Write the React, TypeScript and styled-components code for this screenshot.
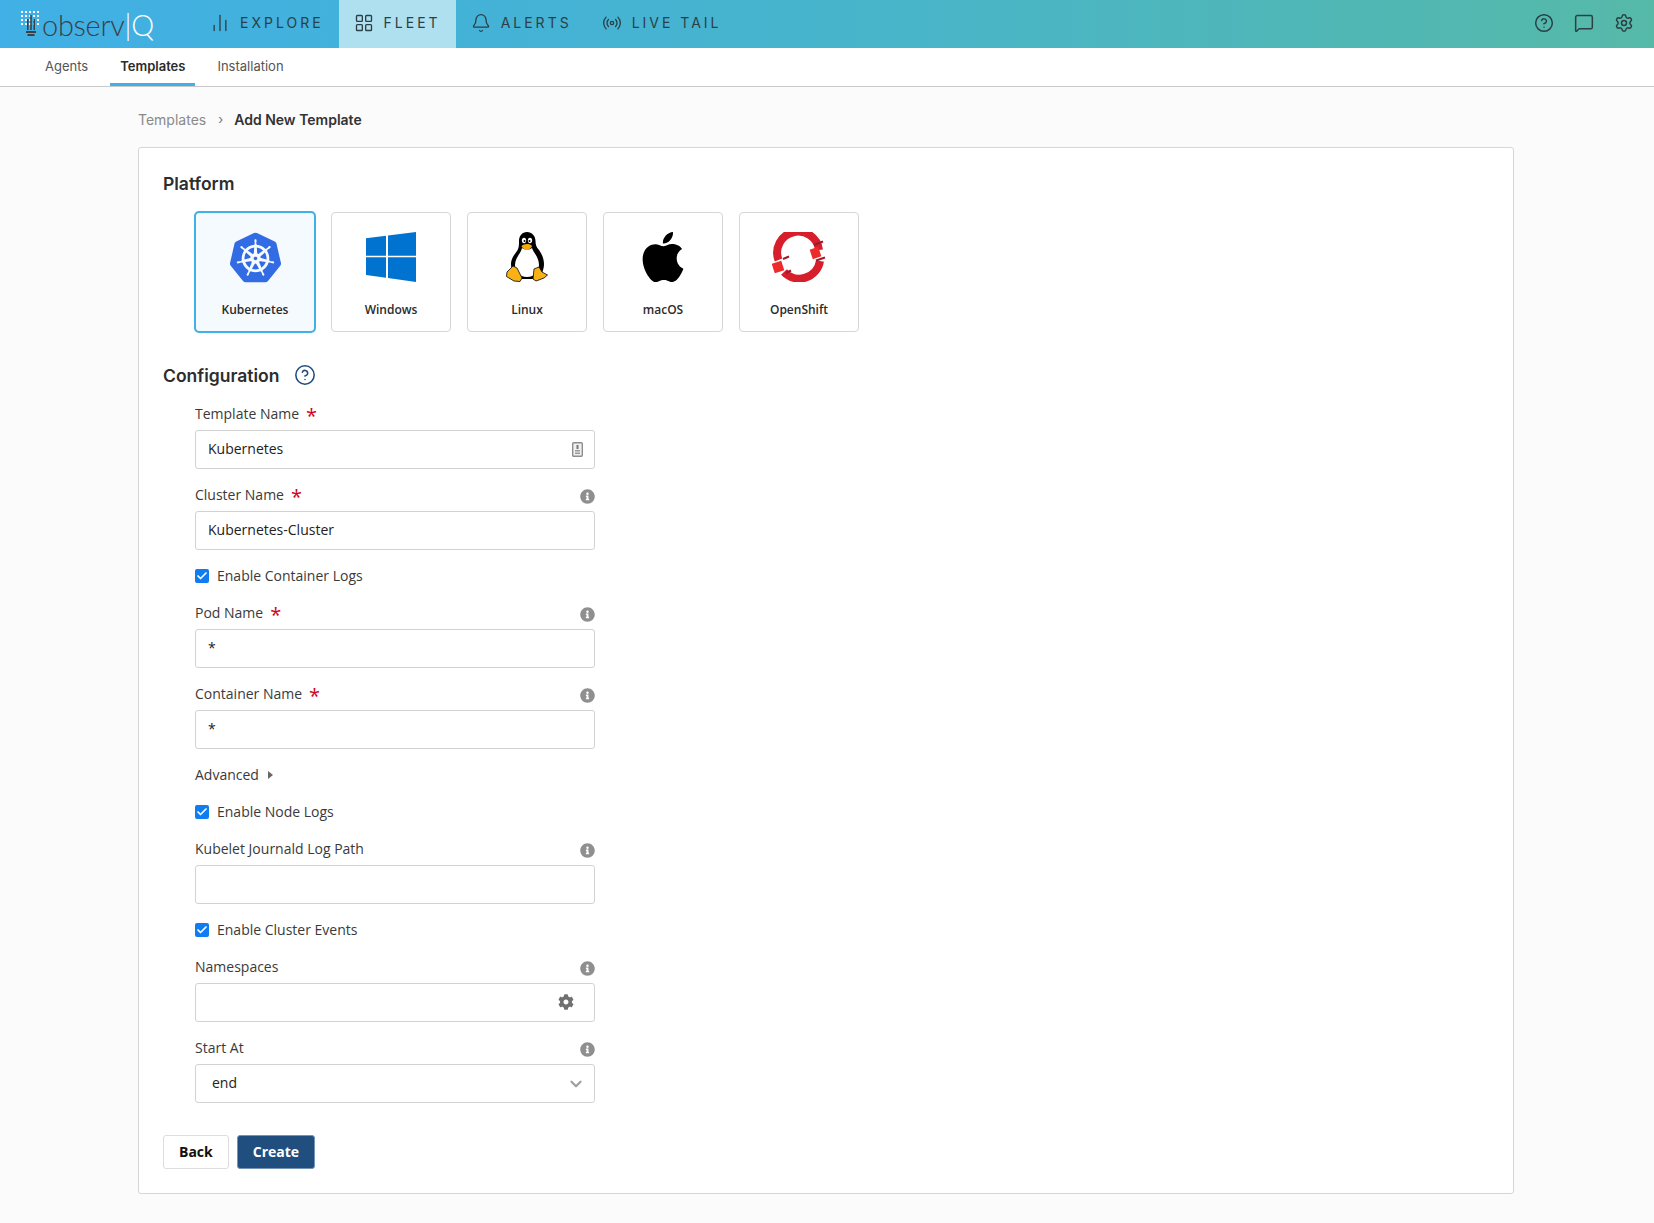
import React from 'react';
import styled, { createGlobalStyle } from 'styled-components';
import {
  Bell,
  ChartNoAxesColumn,
  Check,
  ChevronDown,
  CircleHelp,
  LayoutGrid,
  MessageSquare,
  Radio,
  Settings,
} from 'lucide-react';
import { FaCog, FaInfoCircle } from 'react-icons/fa';
import { SiApple, SiKubernetes } from 'react-icons/si';

const GlobalStyle = createGlobalStyle`
  html, body {
    margin: 0;
    padding: 0;
    background: #fbfbfb;
    font-family: 'Open Sans', sans-serif;
    color: #333333;
  }
  * {
    box-sizing: border-box;
  }
`;

const TopBar = styled.header`
  display: flex;
  align-items: stretch;
  height: 48px;
  background: linear-gradient(90deg, #40b0e6 0%, #47b4cc 50%, #56b9a8 100%);
`;

const Logo = styled.div`
  display: flex;
  align-items: center;
  width: 195px;
  padding-left: 20px;
  font-family: 'Lato', sans-serif;
  font-weight: 300;
  font-size: 29px;
  letter-spacing: -0.3px;
  color: #3c4147;
  & > svg {
    margin-right: 2px;
  }
`;

const LogoMark = styled.span`
  color: #ffffff;
`;

const NavItem = styled.div<{ $active?: boolean }>`
  display: flex;
  align-items: center;
  gap: 10px;
  padding: 0 15px 3px;
  font-family: 'Inter', sans-serif;
  font-size: 14px;
  font-weight: 400;
  letter-spacing: 3px;
  color: #2c3f47;
  background: ${(p) => (p.$active ? '#aee0f0' : 'transparent')};
`;

const TopIcons = styled.div`
  display: flex;
  align-items: center;
  gap: 20px;
  margin-left: auto;
  padding: 0 20px 2px 0;
  color: #2b4046;
`;

const SubBar = styled.nav`
  display: flex;
  gap: 12px;
  height: 39px;
  padding-left: 35px;
  background: #ffffff;
  border-bottom: 1px solid #c9c9cb;
`;

const SubTab = styled.div<{ $active?: boolean }>`
  display: flex;
  align-items: center;
  padding: 0 10px;
  height: 38px;
  font-family: 'Inter', sans-serif;
  font-size: 13px;
  font-weight: ${(p) => (p.$active ? 600 : 400)};
  color: ${(p) => (p.$active ? '#2b2b2b' : '#555555')};
  border-bottom: 3px solid ${(p) => (p.$active ? '#40b0e6' : 'transparent')};
`;

const Main = styled.main`
  width: 1376px;
  margin-left: 138px;
  padding-top: 23px;
  padding-bottom: 30px;
`;

const Crumbs = styled.div`
  display: flex;
  align-items: center;
  height: 20px;
  padding-bottom: 2px;
  margin-bottom: 17px;
  font-family: 'Inter', sans-serif;
  font-size: 14px;
  color: #8a8a8a;
`;

const CrumbSep = styled.span`
  margin: 0 11px 0 12px;
  font-size: 13px;
  color: #777777;
`;

const CrumbCurrent = styled.span`
  font-weight: 600;
  color: #333333;
`;

const Card = styled.section`
  padding: 25px 24px 24px;
  background: #ffffff;
  border: 1px solid #d6d6d6;
  border-radius: 3px;
`;

const Heading = styled.h2`
  display: flex;
  align-items: center;
  gap: 15px;
  margin: 0;
  height: 20px;
  font-family: 'Inter', sans-serif;
  font-size: 17.5px;
  font-weight: 600;
  color: #2d2d2d;
`;

const HelpMark = styled.span`
  display: flex;
  color: #1f4e7f;
`;

const TileRow = styled.div`
  display: flex;
  gap: 16px;
  margin: 19px 0 33px 32px;
`;

const Tile = styled.div<{ $selected?: boolean }>`
  display: flex;
  flex-direction: column;
  align-items: center;
  width: 120px;
  height: 120px;
  padding-top: 19px;
  background: ${(p) => (p.$selected ? '#f5faff' : '#ffffff')};
  border: 1px solid #d6d6d6;
  border-radius: 4px;
  ${(p) => p.$selected && 'outline: 2px solid #40b0e6; outline-offset: -1px;'}
`;

const TileIcon = styled.div`
  display: flex;
  align-items: center;
  justify-content: center;
  height: 50px;
  margin-bottom: 20px;
`;

const TileName = styled.div`
  font-size: 12px;
  font-weight: 600;
  line-height: 16px;
  color: #2b2b2b;
`;

const Fields = styled.div`
  display: flex;
  flex-direction: column;
  gap: 16px;
  width: 400px;
  margin: 19px 0 32px 32px;
`;

const Field = styled.div`
  display: flex;
  flex-direction: column;
  gap: 6px;
`;

const LabelRow = styled.div`
  display: flex;
  align-items: center;
  justify-content: space-between;
  height: 20px;
  padding-bottom: 2px;
  font-size: 14px;
  color: #3a3a3a;
  & > svg {
    margin-top: 4px;
    color: #8f8f8f;
  }
`;

const Required = styled.span`
  margin-left: 7px;
  font-size: 20px;
  line-height: 14px;
  vertical-align: -4px;
  color: #d0021b;
`;

const InputBox = styled.div`
  display: flex;
  align-items: center;
  height: 39px;
  padding: 0 11px 0 12px;
  background: #ffffff;
  border: 1px solid #d2d2d2;
  border-radius: 3px;
`;

const TextInput = styled.input`
  flex: 1;
  min-width: 0;
  margin-bottom: 2px;
  padding: 0;
  border: none;
  outline: none;
  background: transparent;
  font-family: 'Open Sans', sans-serif;
  font-size: 14px;
  color: #222222;
`;

const CogIcon = styled(FaCog)`
  margin: 0 9px 2px 0;
  color: #707070;
`;

const SelectBox = styled(InputBox)`
  justify-content: space-between;
  padding: 0 9px 2px 16px;
  font-size: 14px;
  color: #222222;
  & > svg {
    margin-top: 2px;
    color: #a0a0a0;
  }
`;

const CheckRow = styled.label`
  display: flex;
  align-items: center;
  gap: 8px;
  height: 21px;
  padding-bottom: 2px;
  font-size: 14px;
  color: #3a3a3a;
`;

const CheckBox = styled.span`
  display: flex;
  align-items: center;
  justify-content: center;
  width: 14px;
  height: 14px;
  background: #0f7cf0;
  border-radius: 2px;
  color: #ffffff;
`;

const Disclosure = styled.div`
  display: flex;
  align-items: center;
  gap: 9px;
  height: 21px;
  padding-bottom: 2px;
  font-size: 14px;
  color: #3a3a3a;
`;

const Caret = styled.span`
  width: 0;
  height: 0;
  border-left: 5px solid #666666;
  border-top: 4px solid transparent;
  border-bottom: 4px solid transparent;
`;

const Actions = styled.div`
  display: flex;
  gap: 8px;
`;

const Button = styled.button<{ $primary?: boolean }>`
  height: 34px;
  padding: 0 15px 2px;
  font-family: 'Open Sans', sans-serif;
  font-size: 14px;
  font-weight: 700;
  color: ${(p) => (p.$primary ? '#ffffff' : '#111111')};
  background: ${(p) => (p.$primary ? '#1f4e7f' : '#ffffff')};
  border: 1px solid ${(p) => (p.$primary ? '#7593b3' : '#dedede')};
  border-radius: 3px;
`;

const BulbLogo = () => (
  <svg width="20" height="27" viewBox="0 0 20 27">
    {[0, 1, 2, 3].map((r) =>
      [0, 4, 8, 12, 16].map((x) => (
        <rect key={`${r}-${x}`} x={x + 1} y={r * 4} width="2" height="2" fill="#ffffff" />
      )),
    )}
    <rect x="7" y="8" width="1.6" height="11" fill="#3c4147" />
    <rect x="10.2" y="4" width="1.6" height="15" fill="#3c4147" />
    <rect x="13.4" y="8" width="1.6" height="11" fill="#3c4147" />
    <rect x="6" y="20" width="10" height="2" fill="#3c4147" />
    <rect x="7.5" y="23" width="7" height="2" fill="#3c4147" />
  </svg>
);

const WindowsLogo = () => (
  <svg width="50" height="50" viewBox="0 0 50 50" fill="#0072d0">
    <polygon points="0,6.3 20,3.8 20,23.7 0,23.7" />
    <polygon points="22,3.4 50,0 50,23.7 22,23.7" />
    <polygon points="0,25.3 20,25.3 20,45.7 0,43" />
    <polygon points="22,25.3 50,25.3 50,50 22,46" />
  </svg>
);

const TuxLogo = () => (
  <svg width="42" height="50" viewBox="0 0 42 50">
    <path
      d="M21 0c5 0 8.500 4 8.500 9 0 4 1 6 3.500 9 3 4 5 9 5 14 0 6-3 13-7 15H12c-4-2-7-9-7-15 0-5 3-9 6-13 2-3 2-6 2-10 0-5 3-9 8-9z"
      fill="#000000"
    />
    <path
      d="M16 16c3 2 7 2 10 0 1 4 7 9 7 17 0 6-4 12-12 12S9 39 9 33c0-7 6-12 7-17z"
      fill="#ffffff"
    />
    <ellipse cx="18" cy="8.500" rx="2.100" ry="2.800" fill="#ffffff" />
    <ellipse cx="24" cy="8.500" rx="2.100" ry="2.800" fill="#ffffff" />
    <circle cx="18.500" cy="9" r="1" fill="#000000" />
    <circle cx="23.500" cy="9" r="1" fill="#000000" />
    <path d="M15.500 14c2-2 8-3 10.500 0 0 1-3 4-5 4s-5-2-5.500-4z" fill="#f5a90d" />
    <polygon
      points="1,40 7,34 11,36 16,46 14,49.500 8,49 0.500,44.500"
      fill="#f9b115"
      stroke="#1a1a1a"
      strokeWidth="0.900"
      strokeLinejoin="round"
    />
    <polygon
      points="28,37 33,35 36,40 41.500,43 38,46 30,49 27,47"
      fill="#f9b115"
      stroke="#1a1a1a"
      strokeWidth="0.900"
      strokeLinejoin="round"
    />
  </svg>
);

const OpenShiftLogo = () => (
  <svg width="54" height="50" viewBox="0 0 54 50" fill="none">
    <path d="M6.500 28A21 21 0 1 1 47 18" stroke="#d71e2b" strokeWidth="8" />
    <path d="M48 29A21 21 0 0 1 12 40" stroke="#d71e2b" strokeWidth="8" />
    <rect x="1" y="30" width="10" height="10" fill="#ee2b2b" transform="rotate(-18 6 35)" />
    <rect x="39" y="16" width="9" height="10" fill="#ee2b2b" transform="rotate(-18 43.500 21)" />
    <path d="M11 27l6-2.500M14 41l5-2.500M42 13l9-3.500M44 28.500l9-3" stroke="#a01a2c" strokeWidth="2" />
  </svg>
);

const VaultIcon = () => (
  <svg width="11" height="15" viewBox="0 0 11 15">
    <rect x="0.7" y="0.7" width="9.600" height="13.600" rx="1" fill="#f1f1f1" stroke="#8d8d8d" strokeWidth="1.400" />
    <rect x="4.500" y="3" width="2" height="4" fill="#777777" />
    <rect x="3" y="8" width="5" height="1.500" fill="#999999" />
    <rect x="3" y="10.500" width="5" height="1.500" fill="#999999" />
  </svg>
);

const Info = () => <FaInfoCircle size={15} />;

const Star = () => <Required>*</Required>;

const Checked: React.FC<{ label: string }> = ({ label }) => (
  <CheckRow>
    <CheckBox>
      <Check size={12} strokeWidth={3.5} />
    </CheckBox>
    {label}
  </CheckRow>
);

const platforms = [
  { name: 'Kubernetes', icon: <SiKubernetes size={51} color="#326ce5" />, selected: true },
  { name: 'Windows', icon: <WindowsLogo /> },
  { name: 'Linux', icon: <TuxLogo /> },
  { name: 'macOS', icon: <SiApple size={50} color="#000000" /> },
  { name: 'OpenShift', icon: <OpenShiftLogo /> },
];

const App: React.FC = () => {
  return (
    <>
      <GlobalStyle />
      <TopBar>
        <Logo>
          <BulbLogo />
          observ<LogoMark>|Q</LogoMark>
        </Logo>
        <NavItem>
          <ChartNoAxesColumn size={20} strokeWidth={1.6} />
          EXPLORE
        </NavItem>
        <NavItem $active>
          <LayoutGrid size={20} strokeWidth={1.6} />
          FLEET
        </NavItem>
        <NavItem>
          <Bell size={20} strokeWidth={1.6} />
          ALERTS
        </NavItem>
        <NavItem>
          <Radio size={20} strokeWidth={1.6} />
          LIVE TAIL
        </NavItem>
        <TopIcons>
          <CircleHelp size={20} strokeWidth={1.8} />
          <MessageSquare size={20} strokeWidth={1.8} />
          <Settings size={20} strokeWidth={1.8} />
        </TopIcons>
      </TopBar>
      <SubBar>
        <SubTab>Agents</SubTab>
        <SubTab $active>Templates</SubTab>
        <SubTab>Installation</SubTab>
      </SubBar>
      <Main>
        <Crumbs>
          Templates
          <CrumbSep>›</CrumbSep>
          <CrumbCurrent>Add New Template</CrumbCurrent>
        </Crumbs>
        <Card>
          <Heading>Platform</Heading>
          <TileRow>
            {platforms.map((p) => (
              <Tile key={p.name} $selected={p.selected}>
                <TileIcon>{p.icon}</TileIcon>
                <TileName>{p.name}</TileName>
              </Tile>
            ))}
          </TileRow>
          <Heading>
            Configuration
            <HelpMark>
              <CircleHelp size={22} strokeWidth={1.7} />
            </HelpMark>
          </Heading>
          <Fields>
            <Field>
              <LabelRow>
                <span>
                  Template Name
                  <Star />
                </span>
              </LabelRow>
              <InputBox>
                <TextInput readOnly value="Kubernetes" />
                <VaultIcon />
              </InputBox>
            </Field>
            <Field>
              <LabelRow>
                <span>
                  Cluster Name
                  <Star />
                </span>
                <Info />
              </LabelRow>
              <InputBox>
                <TextInput readOnly value="Kubernetes-Cluster" />
              </InputBox>
            </Field>
            <Checked label="Enable Container Logs" />
            <Field>
              <LabelRow>
                <span>
                  Pod Name
                  <Star />
                </span>
                <Info />
              </LabelRow>
              <InputBox>
                <TextInput readOnly value="*" />
              </InputBox>
            </Field>
            <Field>
              <LabelRow>
                <span>
                  Container Name
                  <Star />
                </span>
                <Info />
              </LabelRow>
              <InputBox>
                <TextInput readOnly value="*" />
              </InputBox>
            </Field>
            <Disclosure>
              Advanced
              <Caret />
            </Disclosure>
            <Checked label="Enable Node Logs" />
            <Field>
              <LabelRow>
                Kubelet Journald Log Path
                <Info />
              </LabelRow>
              <InputBox>
                <TextInput readOnly value="" />
              </InputBox>
            </Field>
            <Checked label="Enable Cluster Events" />
            <Field>
              <LabelRow>
                Namespaces
                <Info />
              </LabelRow>
              <InputBox>
                <TextInput readOnly value="" />
                <CogIcon size={16} />
              </InputBox>
            </Field>
            <Field>
              <LabelRow>
                Start At
                <Info />
              </LabelRow>
              <SelectBox>
                end
                <ChevronDown size={18} strokeWidth={3} />
              </SelectBox>
            </Field>
          </Fields>
          <Actions>
            <Button>Back</Button>
            <Button $primary>Create</Button>
          </Actions>
        </Card>
      </Main>
    </>
  );
};

export default App;
